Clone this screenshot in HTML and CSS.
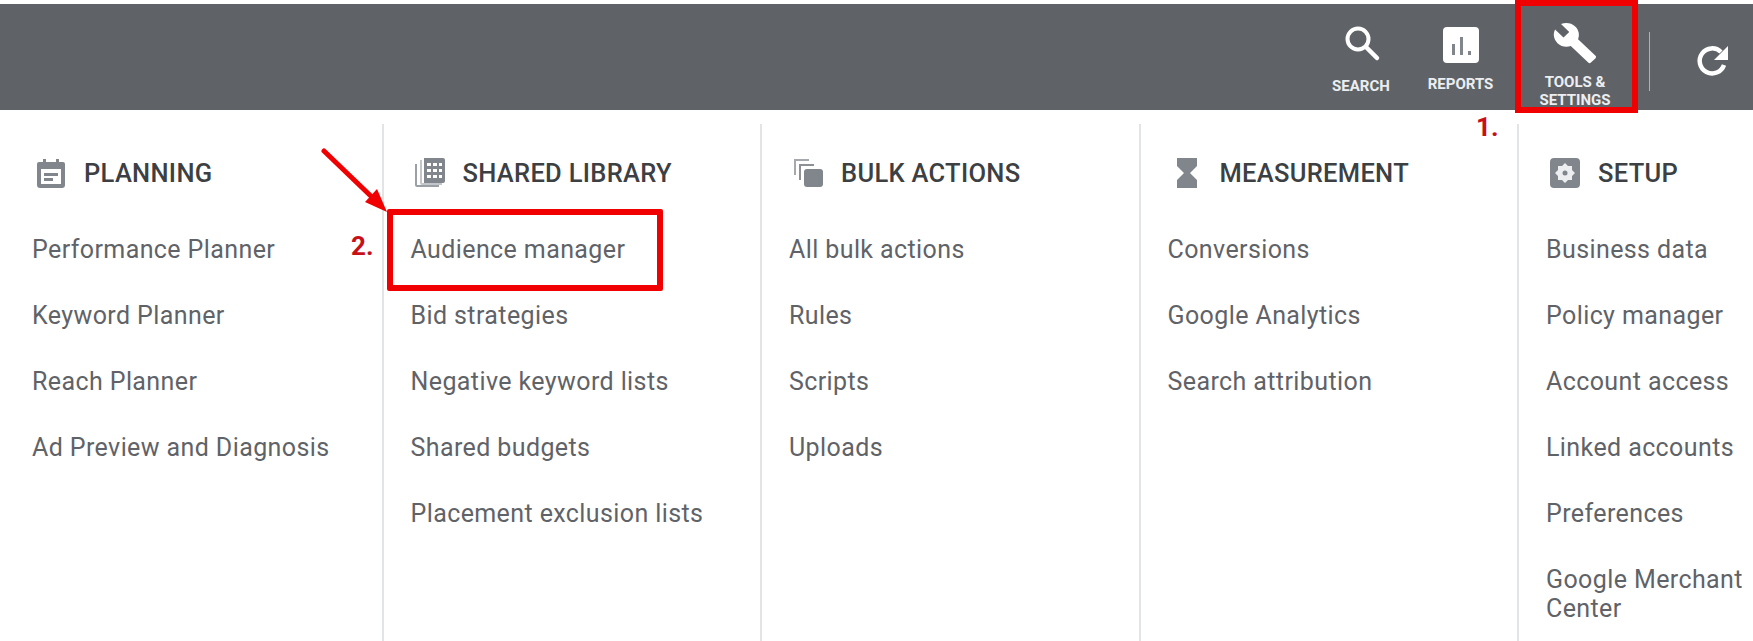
FILE: index.html
```html
<!DOCTYPE html>
<html lang="en">
<head>
  <meta charset="UTF-8" />
  <title>Tools and settings</title>
  <link rel="stylesheet" href="styles.css">
</head>
<body>

  <!-- Top bar -->
  <header class="topbar">
    <div class="tool tool-search">
      <svg class="tool-icon" width="40" height="40" viewBox="0 0 40 40"><circle cx="17" cy="16" r="10.5" fill="none" stroke="#fff" stroke-width="4"/><path d="M25 24l11 11" stroke="#fff" stroke-width="4.5" stroke-linecap="round"/></svg>
      <span>SEARCH</span>
    </div>
    <div class="tool tool-reports">
      <svg class="tool-icon" width="36" height="36" viewBox="0 0 36 36"><rect width="36" height="36" rx="4" fill="#fff"/><path d="M9 17h3v11H9zM17 10h3v18h-3zM25 24h3v4h-3z" fill="#80868b"/></svg>
      <span>REPORTS</span>
    </div>
    <div class="tool tool-settings">
      <svg class="tool-icon" width="46" height="44" viewBox="0 0 24 24" preserveAspectRatio="none"><path d="M22.700 19l-9.100-9.100c.9-2.300.4-5-1.500-6.900-2-2-5-2.400-7.400-1.300L9 6 6 9 1.600 4.700C.4 7.100.9 10.100 2.900 12.100c1.900 1.900 4.600 2.400 6.900 1.500l9.100 9.100c.4.400 1 .4 1.400 0l2.300-2.300c.5-.4.5-1.100.1-1.400z" fill="#fff"/></svg>
      <span>TOOLS &amp;<br>SETTINGS</span>
    </div>
    <div class="bar-divider"></div>
    <svg class="refresh" width="36" height="36" viewBox="0 0 36 36"><path d="M29 22a12.500 12.500 0 1 1-3-13" fill="none" stroke="#fff" stroke-width="4.500"/><path d="M33 3v14H19z" fill="#fff"/></svg>
  </header>

  <!-- Menu columns -->
  <main class="menu">
    <section class="col">
      <h2 class="col-title">
        <span class="col-icon"><svg width="32" height="32" viewBox="0 0 32 32"><path d="M4 5h4V2h3v3h10V2h3v3h4a2 2 0 0 1 2 2v21a3 3 0 0 1-3 3H5a3 3 0 0 1-3-3V7a2 2 0 0 1 2-2zm2 7v15h20V12zm3 4h14v3H9zm0 5h9v3H9z" fill="#80868b" fill-rule="evenodd"/></svg></span>
        PLANNING
      </h2>
      <ul class="links">
        <li>Performance Planner</li>
        <li>Keyword Planner</li>
        <li>Reach Planner</li>
        <li>Ad Preview and Diagnosis</li>
      </ul>
    </section>
    <section class="col">
      <h2 class="col-title">
        <span class="col-icon"><svg width="32" height="32" viewBox="0 0 32 32"><path d="M1 7h2v21h22v2H3a2 2 0 0 1-2-2z" fill="#9aa0a6"/><path d="M6 3h2v23h20v2H8a2 2 0 0 1-2-2z" fill="#9aa0a6" opacity=".6"/><path d="M10 1h19a2 2 0 0 1 2 2v21a2 2 0 0 1-2 2H10zm3 5v3h4V6zm6 0v3h4V6zm6 0v3h3V6zm-12 6v3h4v-3zm6 0v3h4v-3zm6 0v3h3v-3zm-12 6v3h4v-3zm6 0v3h4v-3zm6 0v3h3v-3z" fill="#80868b" fill-rule="evenodd"/></svg></span>
        SHARED LIBRARY
      </h2>
      <ul class="links">
        <li>Audience manager</li>
        <li>Bid strategies</li>
        <li>Negative keyword lists</li>
        <li>Shared budgets</li>
        <li>Placement exclusion lists</li>
      </ul>
    </section>
    <section class="col">
      <h2 class="col-title">
        <span class="col-icon"><svg width="32" height="32" viewBox="0 0 32 32"><path d="M2 2h15v2H4v14H2z" fill="#a5a9ad"/><path d="M7 7h15v2H9v14H7z" fill="#8d9196"/><rect x="12" y="12" width="19" height="18" rx="3" fill="#80868b"/></svg></span>
        BULK ACTIONS
      </h2>
      <ul class="links">
        <li>All bulk actions</li>
        <li>Rules</li>
        <li>Scripts</li>
        <li>Uploads</li>
      </ul>
    </section>
    <section class="col">
      <h2 class="col-title">
        <span class="col-icon"><svg width="32" height="32" viewBox="0 0 32 32"><path d="M6 1h20v8l-7 7 7 7v8H6v-8l7-7-7-7z" fill="#80868b"/></svg></span>
        MEASUREMENT
      </h2>
      <ul class="links">
        <li>Conversions</li>
        <li>Google Analytics</li>
        <li>Search attribution</li>
      </ul>
    </section>
    <section class="col">
      <h2 class="col-title">
        <span class="col-icon"><svg width="32" height="32" viewBox="0 0 32 32"><rect x="1" y="1" width="30" height="30" rx="4" fill="#80868b"/><path d="M16 6l3 3h4v4l3 3-3 3v4h-4l-3 3-3-3H9v-4l-3-3 3-3V9h4z" fill="#eceef0"/><circle cx="16" cy="16" r="2.500" fill="#80868b"/></svg></span>
        SETUP
      </h2>
      <ul class="links">
        <li>Business data</li>
        <li>Policy manager</li>
        <li>Account access</li>
        <li>Linked accounts</li>
        <li>Preferences</li>
        <li>Google Merchant<br>Center</li>
      </ul>
    </section>
  </main>

  <!-- Red annotations drawn over the screenshot -->
  <div class="mark mark-tools"></div>
  <div class="mark mark-audience"></div>
  <span class="step step-one">1.</span>
  <span class="step step-two">2.</span>
  <svg class="arrow" width="80" height="80" viewBox="0 0 80 80"><path d="M3 3l52 50" stroke="#f00000" stroke-width="5" stroke-linecap="round"/><path d="M66 64L44 54l12-13z" fill="#f00000"/></svg>

</body>
</html>
```

FILE: styles.css
```css
/* Global Styles */
body {
  margin: 0;
  height: 641px;
  background: #fff;
  overflow: hidden;
  position: relative;
  font-family: 'Roboto', sans-serif;
}
/* Top bar */
.topbar {
  margin-top: 4px;
  height: 106px;
  background: #5f6368;
  display: flex;
  justify-content: flex-end;
  align-items: flex-start;
  padding-right: 22px;
  color: #eceef0;
}
.tool {
  display: flex;
  flex-direction: column;
  align-items: center;
  font-size: 15px;
  font-weight: 700;
  line-height: 18px;
  text-align: center;
}
.tool-icon { display: block; }
.tool-search { width: 90px; padding-top: 19px; }
.tool-search span { margin-top: 14px; }
.tool-reports { width: 109px; padding-top: 23px; }
.tool-reports span { margin-top: 12px; }
.tool-settings { width: 120px; padding-top: 17px; }
.tool-settings span { margin-top: 8px; }
.bar-divider {
  width: 1px;
  height: 59px;
  margin: 28px 0 0 14px;
  background: #aeb1b5;
}
.refresh { margin: 39px 0 0 45px; }
/* Menu columns */
.menu {
  display: flex;
  margin-top: 14px;
  padding-left: 5px;
  height: 517px;
}
.col {
  flex: 0 0 378.500px;
  box-sizing: border-box;
  padding: 29px 0 0 27px;
  border-right: 2px solid #e3e4e6;
}
.col:last-child {
  flex: 1 1 0;
  min-width: 0;
  border-right: none;
}
.col-title {
  display: flex;
  align-items: center;
  height: 40px;
  margin: 0;
  font-size: 25.500px;
  font-weight: 500;
  letter-spacing: 0.300px;
  color: #3c4043;
}
.col-icon {
  flex: 0 0 38px;
  margin-right: 14px;
  display: flex;
  justify-content: center;
}
.links {
  list-style: none;
  margin: 0;
  padding: 0;
}
.links li {
  margin-top: 37px;
  font-size: 25px;
  letter-spacing: 0.400px;
  line-height: 29px;
  color: #5f6368;
}
.links li:first-child { margin-top: 42px; }
/* Annotations */
.mark {
  position: absolute;
  box-sizing: border-box;
  border: 6px solid #f00000;
}
.mark-tools {
  left: 1515px;
  top: 0;
  width: 123px;
  height: 113px;
}
.mark-audience {
  left: 387px;
  top: 209px;
  width: 276px;
  height: 82px;
  border-radius: 2px;
}
.step {
  position: absolute;
  font-size: 26px;
  font-weight: 700;
  line-height: 30px;
  color: #c8101a;
}
.step-one { left: 1476px; top: 112px; }
.step-two { left: 351px; top: 231px; }
.arrow {
  position: absolute;
  left: 321px;
  top: 148px;
}
```
